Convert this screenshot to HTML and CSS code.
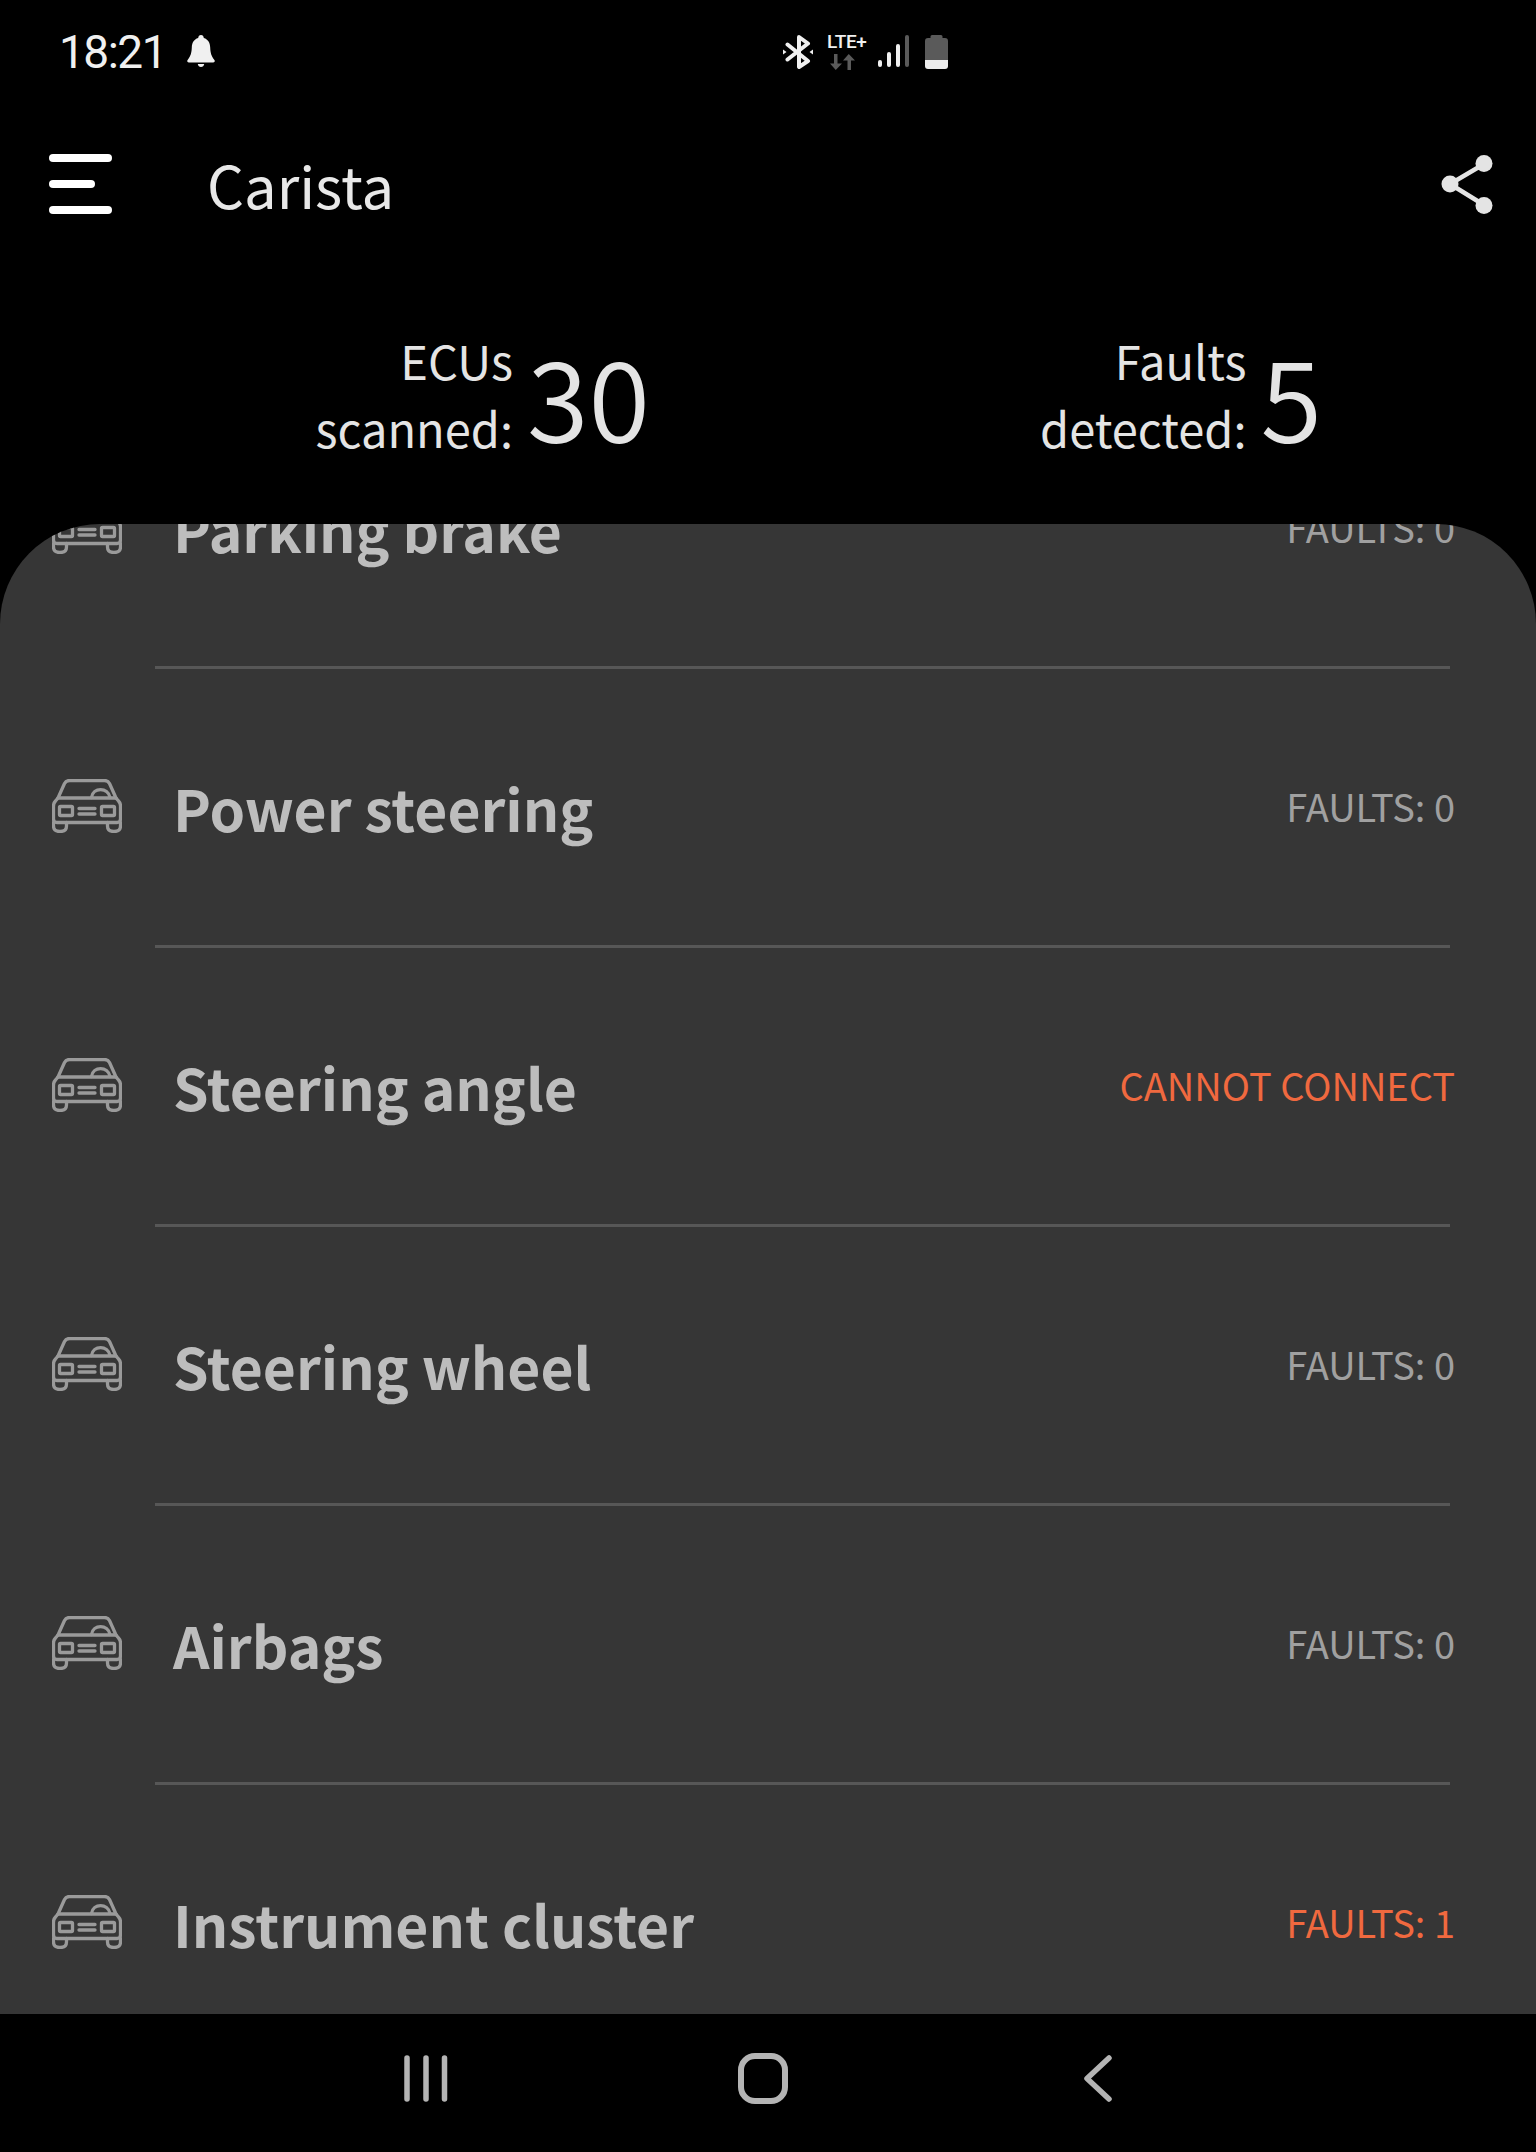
FILE: index.html
```html
<!DOCTYPE html>
<html lang="en">
<head>
<meta charset="utf-8">
<title>Carista</title>
<link rel="stylesheet" href="styles.css">
</head>
<body>
<svg class="defs" width="0" height="0" aria-hidden="true">
  <symbol id="car" viewBox="0 0 70 54">
    <g fill="none" stroke="currentColor" stroke-width="3.300" stroke-linejoin="round" stroke-linecap="round">
      <path d="M6 19 L12.500 4.500 Q14 1.500 17.500 1.500 H52.500 Q56 1.500 57.500 4.500 L64 19"/>
      <path d="M6 19 H64 L66.500 22 Q68.500 24 68.500 27 V40 Q68.500 43.500 65 43.500 H5 Q1.500 43.500 1.500 40 V27 Q1.500 24 3.500 22 Z"/>
      <path d="M1.500 43.500 V47 Q1.500 52.500 8 52.500 Q14.500 52.500 14.500 47 V43.500"/>
      <path d="M55.500 43.500 V47 Q55.500 52.500 62 52.500 Q68.500 52.500 68.500 47 V43.500"/>
      <rect x="7.500" y="27.500" width="13" height="9" rx="1"/>
      <rect x="49.500" y="27.500" width="13" height="9" rx="1"/>
      <path d="M27 29.500 H43 M27 35 H43"/>
      <path d="M39.500 18.500 C41 8 56 8 58 18.500"/>
    </g>
  </symbol>
</svg>
<div class="screen">
  <header class="status">
    <div class="status-left">
      <span class="clock">18:21</span>
      <svg class="bell" viewBox="0 0 28 32"><path fill="#f0f0f0" d="M14 0c1.700 0 2.600 1.200 2.800 3 4.500 1.300 6.200 5 6.400 9.500.2 5 1 8.500 4.200 12.500.8 1.200.2 2.500-1.200 2.500H1.800C.4 27.500-.2 26.200.6 25c3.200-4 4-7.500 4.200-12.500C5 8 6.700 4.300 11.200 3c.2-1.800 1.100-3 2.800-3z"/><path fill="#f0f0f0" d="M10.800 29h6.400c-.3 1.800-1.500 3-3.200 3s-2.900-1.200-3.200-3z"/></svg>
    </div>
    <div class="status-icons">
      <svg class="bt" viewBox="0 0 30 34"><path fill="none" stroke="#f0f0f0" stroke-width="4" stroke-linejoin="round" stroke-linecap="round" d="M4.500 9.500 L25 26 L16 32 V2 L25 8.500 L4.500 24.500"/><path fill="#f0f0f0" d="M0 14.500l3.500 2.500L0 19.500zM30 14.500l-3.500 2.500 3.500 2.500z"/></svg>
      <div class="lte">
        <span class="lte-text">LTE+</span>
        <svg class="lte-arrows" viewBox="0 0 25 16"><path fill="#5a5a5a" d="M4 0h3.500v9.500H12L5.750 16 0 9.500h4zM17.500 16H21V6.500h4L18.750 0 13 6.500h4.500z"/></svg>
      </div>
      <div class="signal">
        <i class="bar bar-1"></i><i class="bar bar-2"></i><i class="bar bar-3"></i><i class="bar bar-4"></i>
      </div>
      <svg class="battery" viewBox="0 0 23 34"><path fill="#5a5a5a" d="M7 0h9a1.500 1.500 0 0 1 1.500 1.500V3H20a3 3 0 0 1 3 3v19H0V6a3 3 0 0 1 3-3h2.500V1.500A1.500 1.500 0 0 1 7 0z"/><path fill="#ececec" d="M0 25h23v6a3 3 0 0 1-3 3H3a3 3 0 0 1-3-3z"/></svg>
    </div>
  </header>

  <div class="toolbar">
    <div class="menu"><i class="menu-bar"></i><i class="menu-bar menu-bar-short"></i><i class="menu-bar"></i></div>
    <h1 class="title">Carista</h1>
    <svg class="share" viewBox="0 0 52 59">
      <path fill="none" stroke="#e4e4e4" stroke-width="4.500" d="M43 9 L9 29 L43 50"/>
      <circle cx="43" cy="8.500" r="8.500" fill="#e4e4e4"/><circle cx="9" cy="29" r="8.500" fill="#e4e4e4"/><circle cx="43" cy="50.500" r="8.500" fill="#e4e4e4"/>
    </svg>
  </div>

  <section class="summary">
    <div class="stat stat-ecus">
      <span class="stat-label">ECUs<br>scanned:</span>
      <span class="stat-value">30</span>
    </div>
    <div class="stat stat-faults">
      <span class="stat-label">Faults<br>detected:</span>
      <span class="stat-value">5</span>
    </div>
  </section>

  <main class="panel">
    <ul class="list">
      <li class="row"><svg class="car"><use href="#car"/></svg><span class="name">Parking brake</span><span class="state">FAULTS: 0</span></li>
      <li class="divider"></li>
      <li class="row"><svg class="car"><use href="#car"/></svg><span class="name">Power steering</span><span class="state">FAULTS: 0</span></li>
      <li class="divider"></li>
      <li class="row"><svg class="car"><use href="#car"/></svg><span class="name">Steering angle</span><span class="state state-error">CANNOT CONNECT</span></li>
      <li class="divider"></li>
      <li class="row"><svg class="car"><use href="#car"/></svg><span class="name">Steering wheel</span><span class="state">FAULTS: 0</span></li>
      <li class="divider"></li>
      <li class="row"><svg class="car"><use href="#car"/></svg><span class="name">Airbags</span><span class="state">FAULTS: 0</span></li>
      <li class="divider"></li>
      <li class="row"><svg class="car"><use href="#car"/></svg><span class="name">Instrument cluster</span><span class="state state-error">FAULTS: 1</span></li>
    </ul>
  </main>

  <nav class="navbar">
    <svg class="nav-recent" viewBox="0 0 44 47"><path stroke="#b4b4b4" stroke-width="5.500" stroke-linecap="round" d="M3 3v41M22 3v41M40.500 3v41"/></svg>
    <svg class="nav-home" viewBox="0 0 50 51"><rect x="3" y="3" width="44" height="45" rx="14" fill="none" stroke="#b4b4b4" stroke-width="6"/></svg>
    <svg class="nav-back" viewBox="0 0 28 47"><path fill="none" stroke="#b4b4b4" stroke-width="5.500" stroke-linecap="round" stroke-linejoin="round" d="M25 3 L3 23.500 L25 44"/></svg>
  </nav>
</div>
</body>
</html>
```
FILE: styles.css
```css
* { box-sizing: border-box; }
html, body { margin: 0; padding: 0; background: #000; }
.defs { position: absolute; }
.screen {
  width: 1536px;
  height: 2152px;
  display: flex;
  flex-direction: column;
  background: #000;
  color: #e4e4e4;
  font-family: "Noto Sans CJK JP", "Noto Sans", sans-serif;
  overflow: hidden;
}

/* status bar */
.status {
  height: 104px;
  flex: none;
  display: flex;
  align-items: flex-start;
  padding: 35px 0 0 59px;
}
.status-left { display: flex; align-items: flex-start; width: 724px; }
.clock {
  font-family: Roboto, sans-serif;
  font-size: 46px;
  line-height: 34px;
  color: #f0f0f0;
  width: 128px;
  letter-spacing: -1.500px;
}
.bell { width: 28px; height: 32px; }
.status-icons { display: flex; align-items: flex-start; }
.bt { width: 30px; height: 34px; margin-right: 14px; }
.lte { width: 40px; margin-right: 11px; display: flex; flex-direction: column; align-items: flex-start; }
.lte-text {
  font-family: Roboto, sans-serif;
  font-weight: 500;
  font-size: 19px;
  line-height: 13px;
  color: #f0f0f0;
  letter-spacing: -0.3px;
  white-space: nowrap;
}
.lte-arrows { width: 25px; height: 16px; margin: 6px 0 0 3px; }
.signal { display: flex; align-items: flex-end; gap: 5px; height: 32px; margin-right: 16px; }
.bar { display: block; width: 4px; background: #f0f0f0; border-radius: 2px; }
.bar-1 { height: 7px; }
.bar-2 { height: 15px; }
.bar-3 { height: 23px; }
.bar-4 { height: 32px; background: #5a5a5a; }
.battery { width: 23px; height: 34px; }

/* toolbar */
.toolbar {
  height: 160px;
  flex: none;
  display: flex;
  align-items: center;
  padding: 0 43px 0 49px;
}
.menu { width: 63px; display: flex; flex-direction: column; gap: 18px; }
.menu-bar { display: block; height: 8px; background: #fff; border-radius: 4px; }
.menu-bar-short { width: 46px; }
.title {
  margin: 0 0 0 95px;
  flex: 1;
  font-weight: 400;
  font-size: 58px;
  line-height: 72px;
  color: #e8e8e8;
}
.share { width: 52px; height: 59px; }

/* summary */
.summary {
  height: 260px;
  flex: none;
  display: grid;
  grid-template-columns: 731px 805px;
  padding-top: 62px;
  align-items: start;
}
.stat { display: flex; justify-content: flex-end; align-items: center; }
.stat-ecus { padding-right: 81px; }
.stat-faults { padding-right: 214px; }
.stat-label {
  font-size: 47px;
  line-height: 68px;
  text-align: right;
  color: #e4e4e4;
}
.stat-value {
  font-size: 112px;
  line-height: 136px;
  margin-left: 14px;
  color: #e4e4e4;
  font-weight: 350;
}

/* list panel */
.panel {
  flex: 1;
  min-height: 0;
  background: #363636;
  border-radius: 100px 100px 0 0;
  overflow: hidden;
}
.list { list-style: none; margin: -134px 0 0; padding: 0; }
.row {
  height: 276px;
  display: flex;
  align-items: center;
  padding: 0 81px 0 52px;
}
.car { width: 70px; height: 54px; flex: none; color: #9a9a9a; margin: -2px 51px 0 0; }
.name {
  flex: 1;
  font-weight: 700;
  font-size: 57px;
  line-height: 72px;
  color: #bdbdbd;
}
.state { font-size: 38px; line-height: 48px; color: #a0a0a0; margin-top: -3px; }
.state-error { color: #f0693f; }
.divider { height: 3px; margin: 0 86px 0 155px; background: #575757; }

/* nav bar */
.navbar {
  height: 138px;
  flex: none;
  display: flex;
  align-items: flex-start;
  padding: 41px 0 0 404px;
}
.nav-recent { width: 44px; height: 47px; margin-right: 290px; }
.nav-home { width: 50px; height: 51px; margin-top: -2px; margin-right: 296px; }
.nav-back { width: 28px; height: 47px; }
```
